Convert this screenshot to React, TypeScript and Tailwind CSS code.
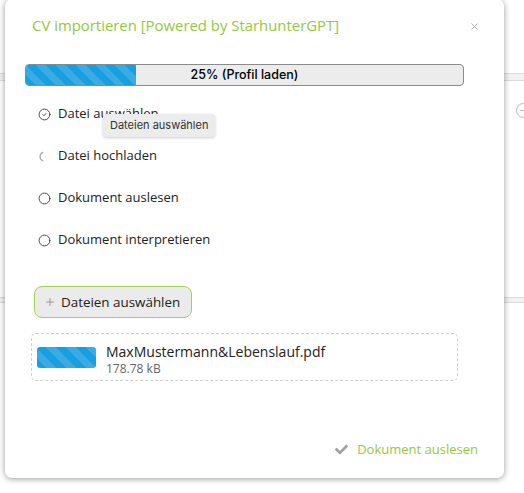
import { Circle, CircleCheck, Plus, X } from "lucide-react";
import { FaCheck } from "react-icons/fa";

const steps = [
  { label: "Datei auswählen", state: "done" },
  { label: "Datei hochladen", state: "loading" },
  { label: "Dokument auslesen", state: "open" },
  { label: "Dokument interpretieren", state: "open" }
];

const stripes =
  "bg-[repeating-linear-gradient(45deg,#189fdf_0px,#189fdf_7px,#3aabe4_7px,#3aabe4_14px)]";

function StepIcon({ state }: { state: string }) {
  if (state === "done") {
    return <CircleCheck className="h-[13px] w-[13px] text-[#333]" strokeWidth={1.6} />;
  }
  if (state === "loading") {
    return (
      <svg viewBox="0 0 14 14" className="h-[13px] w-[13px]">
        <path d="M5 2.5 A5 5 0 0 0 5 11.5" fill="none" stroke="#aaa" strokeWidth="1.4" strokeLinecap="round" />
      </svg>
    );
  }
  return <Circle className="h-[13px] w-[13px] text-[#333]" strokeWidth={1.6} />;
}

export default function App() {
  return (
    <div className="relative h-[493px] w-full overflow-hidden bg-white font-['Open_Sans',sans-serif]">
      {/* page behind the dialog */}
      <div className="absolute inset-x-0 top-[73px] h-[8px] border-y border-[#dcdcdc] bg-[#f2f2f2]" />
      <div className="absolute inset-x-0 top-[297px] h-[6px] border-y border-[#dcdcdc] bg-[#f2f2f2]" />
      <div className="absolute left-[516px] top-[103px] flex h-[15px] w-[15px] items-center justify-center rounded-full border border-[#bbb]">
        <div className="h-px w-[7px] bg-[#bbb]" />
      </div>

      <div className="absolute left-[5px] top-[-1px] h-[479px] w-[499px] rounded-[7px] bg-white shadow-[0_1px_6px_rgba(0,0,0,0.4)]">
        <div className="px-[20px] pt-[16px]">
          <div className="flex items-center justify-between pl-[7px] pr-[4px]">
            <h2 className="text-[14.9px] leading-[20px] text-[#94c840]">
              CV importieren [Powered by StarhunterGPT]
            </h2>
            <X className="mt-[2px] h-[11px] w-[11px] text-[#999]" strokeWidth={1.6} />
          </div>

          <div className="relative mt-[29px] h-[22px] w-[439px] overflow-hidden rounded-[4px] border border-[#8a8a8a] bg-[#ececec]">
            <div className={`h-full w-[110px] ${stripes}`} />
            <div className="absolute inset-0 flex items-center justify-center font-['Inter',sans-serif] text-[12.5px] font-medium text-black">
              25% (Profil laden)
            </div>
          </div>

          <div className="mt-[7px]">
            {steps.map((step) => (
              <div key={step.label} className="flex h-[42px] items-center pl-[13px]">
                <div className="flex w-[20px] items-center">
                  <StepIcon state={step.state} />
                </div>
                <span className="text-[13px] text-[#222]">{step.label}</span>
              </div>
            ))}
          </div>

          <button className="ml-[9px] mt-[25px] flex h-[32px] items-center gap-[5px] rounded-[8px] border-[1.5px] border-[#a6d052] bg-[#ebebeb] pl-[9px] pr-[11px] text-[13.4px] text-[#222]">
            <Plus className="h-[12px] w-[12px] text-[#888]" strokeWidth={1.6} />
            Dateien auswählen
          </button>

          <div className="ml-[6px] mt-[15px] flex h-[48px] w-[427px] items-center gap-[10px] rounded-[5px] border-[1.5px] border-dashed border-[#cfcfcf] px-[5px]">
            <div className={`h-[21px] w-[59px] rounded-[3px] ${stripes}`} />
            <div className="flex flex-col pt-[4px]">
              <span className="text-[14px] leading-[18px] text-[#222]">MaxMustermann&amp;Lebenslauf.pdf</span>
              <span className="text-[12px] leading-[15px] text-[#666]">178.78 kB</span>
            </div>
          </div>

          <div className="mt-[58px] flex items-center justify-end gap-[9px] pr-[6px]">
            <FaCheck className="h-[13px] w-[13px] text-[#a0a0a0]" />
            <span className="text-[13px] leading-[20px] text-[#94c840]">Dokument auslesen</span>
          </div>
        </div>

        <div className="absolute left-[98px] top-[115px] rounded-[3px] bg-[#ececec] px-[7px] py-[3px] font-['Inter',sans-serif] text-[11px] text-[#333] shadow-[0_1px_3px_rgba(0,0,0,0.2)]">
          Dateien auswählen
        </div>
      </div>
    </div>
  );
}
